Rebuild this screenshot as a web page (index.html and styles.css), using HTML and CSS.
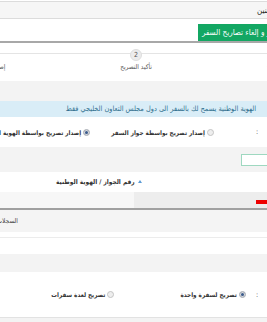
FILE: index.html
```html
<!DOCTYPE html>
<html lang="ar">
<head>
<meta charset="utf-8">
<link rel="stylesheet" href="styles.css">
</head>
<body>
<div class="page">
  <div class="topbar"><span class="topbar-title">للمواطنين</span></div>
  <div class="tabs"><span class="tab-active">إصدار و إلغاء تصاريح السفر</span></div>
  <div class="steps">
    <div class="step step-done"><span class="step-num">1</span><span class="step-label">اختيار التصريح</span></div>
    <div class="step"><span class="step-num">2</span><span class="step-label">تأكيد التصريح</span></div>
    <div class="step"><span class="step-num">3</span><span class="step-label">إصدار التصريح</span></div>
  </div>
  <div class="gap gap-20"></div>
  <div class="alert"><span>الهوية الوطنية يسمح لك بالسفر الى دول مجلس التعاون الخليجي فقط</span></div>
  <div class="form-row form-row-1">
    <span class="colon">:</span>
    <label class="radio-opt"><span class="radio"></span><span class="radio-text">إصدار تصريح بواسطة جواز السفر</span></label>
    <label class="radio-opt"><span class="radio radio-on"></span><span class="radio-text">إصدار تصريح بواسطة الهوية الوطنية</span></label>
  </div>
  <div class="search-row"><span class="search-input"></span></div>
  <div class="table-head"><span class="sort-arrow"></span><span class="th-text">رقم الجواز / الهوية الوطنية</span></div>
  <div class="table-row">
    <div class="cell cell-plain"></div>
    <div class="cell cell-sorted"><span class="red-tag"></span></div>
  </div>
  <div class="table-info"><span class="info-text">السجلات 1 إلى 1 من أصل 1</span></div>
  <div class="panel-strip"><div class="panel-box"></div></div>
  <div class="gap gap-18"></div>
  <div class="form-row form-row-2">
    <span class="colon">:</span>
    <label class="radio-opt"><span class="radio radio-on"></span><span class="radio-text">تصريح لسفرة واحدة</span></label>
    <label class="radio-opt"><span class="radio"></span><span class="radio-text">تصريح لعدة سفرات</span></label>
  </div>
  <div class="gap gap-end"></div>
</div>
</body>
</html>
```
FILE: styles.css
```css
html, body {
  margin: 0;
  padding: 0;
  background: #ffffff;
  overflow: hidden;
}
.page {
  width: 267px;
  overflow: hidden;
  font-family: "DejaVu Sans Condensed", "DejaVu Sans", sans-serif;
  font-size: 7px;
  color: #333;
  padding-top: 1px;
}
.topbar {
  display: flex;
  height: 16px;
  align-items: center;
  background: #f6f6f6;
  border-top: 1px solid #dcdcdc;
  border-bottom: 1px solid #dcdcdc;
  white-space: nowrap;
}
.topbar-title {
  direction: rtl;
  flex-shrink: 0;
  margin-left: 257px;
  font-size: 8px;
  color: #222;
}
.tabs {
  display: flex;
  height: 17px;
  padding-top: 5px;
  border-bottom: 2px solid #a8a8a8;
  white-space: nowrap;
}
.tab-active {
  direction: rtl;
  flex-shrink: 0;
  margin-left: 198px;
  padding: 0 4px;
  background: #13a763;
  color: #fff;
  font-size: 8px;
  line-height: 17px;
}
.steps {
  direction: rtl;
  display: grid;
  grid-template-columns: repeat(3, 148px);
  width: 444px;
  margin-left: -86px;
  height: 38px;
  padding-top: 6px;
  box-sizing: border-box;
  background: linear-gradient(#e4e4e4, #e4e4e4) no-repeat 0 10px / 100% 1px;
}
.step {
  display: flex;
  flex-direction: column;
  align-items: center;
  gap: 2px;
}
.step-num {
  width: 10px;
  height: 10px;
  border-radius: 50%;
  background: #ececec;
  border: 1px solid #dedede;
  color: #555;
  font-size: 7px;
  line-height: 10px;
  text-align: center;
}
.step-label {
  font-size: 6.5px;
  color: #555;
  white-space: nowrap;
}
.step-done .step-label {
  color: #f08a24;
}
.gap {
  background: #f3f3f3;
}
.gap-20 { height: 20px; }
.gap-18 { height: 18px; }
.gap-end { height: 5px; border-top: 1px solid #e2e2e2; }
.alert {
  direction: rtl;
  height: 16px;
  line-height: 16px;
  background: #d9edf7;
  color: #31708f;
  padding-right: 11px;
  white-space: nowrap;
  font-size: 7.3px;
}
.form-row {
  direction: rtl;
  display: flex;
  align-items: center;
  background: #fff;
  white-space: nowrap;
  font-weight: bold;
  color: #333;
}
.form-row-1 {
  height: 30px;
}
.form-row-2 {
  height: 45px;
}
.colon {
  margin-right: 9px;
  margin-left: 42px;
  font-weight: normal;
}
.radio-opt {
  display: flex;
  align-items: center;
  gap: 2px;
  margin-left: 21px;
  flex-shrink: 0;
}
.radio-text {
  font-size: 6.3px;
}
.radio {
  width: 5px;
  height: 5px;
  border-radius: 50%;
  border: 1px solid #c4c4c4;
  background: #eee;
  flex-shrink: 0;
}
.radio-on {
  background: #3a5a8c;
  box-shadow: inset 0 0 0 1px #ddd;
}
.form-row-2 .colon {
  margin-left: 10px;
}
.form-row-2 .radio-opt {
  margin-left: 66px;
}
.search-row {
  display: flex;
  height: 25px;
  background: #f3f3f3;
  align-items: flex-start;
  padding-top: 7px;
  box-sizing: border-box;
}
.search-input {
  flex-shrink: 0;
  margin-left: 241px;
  width: 40px;
  height: 10px;
  background: #fff;
  border: 1px solid #9ed8c0;
}
.table-head {
  display: flex;
  align-items: center;
  height: 20px;
  padding-left: 56px;
  gap: 3px;
  background: #fff;
  font-weight: bold;
  white-space: nowrap;
  flex-direction: row-reverse;
  justify-content: flex-end;
}
.th-text {
  direction: rtl;
  font-size: 6.5px;
  color: #333;
}
.sort-arrow {
  width: 0;
  height: 0;
  border-left: 2.5px solid transparent;
  border-right: 2.5px solid transparent;
  border-bottom: 3px solid #5b9bd5;
  margin-bottom: 2px;
}
.table-row {
  display: flex;
  height: 16px;
  border-bottom: 2px solid #a0a0a0;
}
.cell-plain {
  width: 134px;
  background: #f7f7f7;
}
.cell-sorted {
  flex: 1;
  background: #ededed;
  display: flex;
  align-items: center;
  justify-content: flex-end;
}
.red-tag {
  width: 11px;
  height: 4px;
  background: #ee0000;
  margin-top: 4px;
}
.table-info {
  direction: rtl;
  display: flex;
  height: 22px;
  align-items: center;
  background: #f4f4f4;
  padding-right: 249px;
  white-space: nowrap;
}
.info-text {
  flex-shrink: 0;
  font-size: 6.5px;
  color: #444;
}
.panel-strip {
  height: 22px;
  padding-top: 5px;
  box-sizing: border-box;
  background: #fff;
}
.panel-box {
  height: 16px;
  border-top: 1px solid #ececec;
  border-bottom: 1px solid #ececec;
}
```
